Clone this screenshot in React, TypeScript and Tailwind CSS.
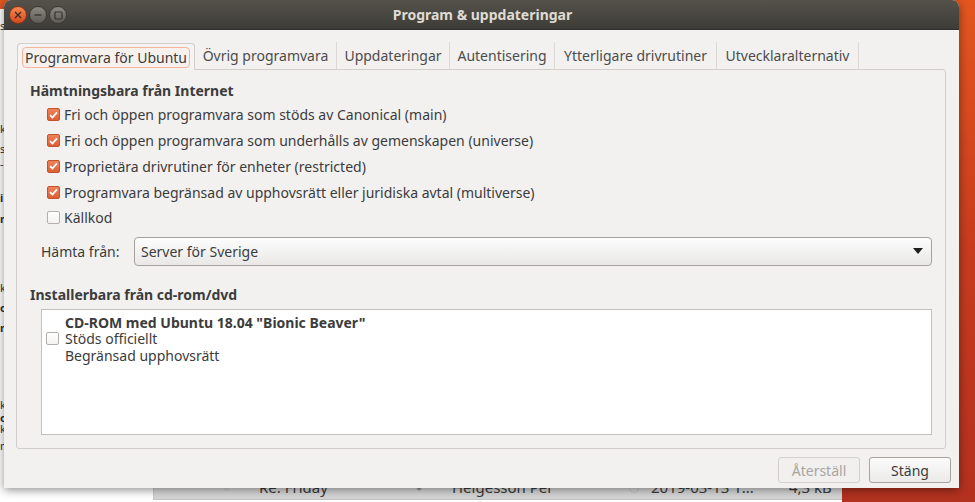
import React from "react";

const FONT = { fontFamily: '"Noto Sans", "Open Sans", sans-serif' };

function Check({ on }: { on: boolean }) {
  if (!on)
    return (
      <span className="inline-block w-[13px] h-[13px] shrink-0 rounded-[2px] border border-[#b3afab] bg-gradient-to-b from-white to-[#f4f3f2]" />
    );
  return (
    <span className="inline-flex items-center justify-center w-[13px] h-[13px] shrink-0 rounded-[2px] border border-[#c2532b] bg-gradient-to-b from-[#f0825a] to-[#de5f33]">
      <svg width="9" height="8" viewBox="0 0 9 8">
        <path d="M1 4.2 L3.4 6.5 L8 1.3" fill="none" stroke="#fff" strokeWidth="1.8" />
      </svg>
    </span>
  );
}

function Row({ on, label }: { on: boolean; label: string }) {
  return (
    <div className="flex items-center h-[25.75px] pl-[17px] gap-[4px]">
      <Check on={on} />
      <span>{label}</span>
    </div>
  );
}

const TABS: { label: string; w: string }[] = [
  { label: "Övrig programvara", w: "w-[142px]" },
  { label: "Uppdateringar", w: "w-[113px]" },
  { label: "Autentisering", w: "w-[105px]" },
  { label: "Ytterligare drivrutiner", w: "w-[162px]" },
  { label: "Utvecklaralternativ", w: "w-[142px]" },
];

// letters of the mail folder pane peeking out behind the dialog
const LEFT_GLYPHS: { t: string; mt: string; b?: boolean }[] = [
  { t: "s", mt: "mt-[12px]" },
  { t: "k", mt: "mt-[94px]" },
  { t: "s", mt: "mt-[11px]" },
  { t: "-", mt: "mt-[6px]" },
  { t: "i", mt: "mt-[25px]", b: true },
  { t: "n", mt: "mt-[12px]", b: true },
  { t: "k", mt: "mt-[60px]" },
  { t: "o", mt: "mt-[11px]", b: true },
  { t: "n", mt: "mt-[11px]", b: true },
  { t: "k", mt: "mt-[68px]" },
  { t: "o", mt: "mt-[4px]", b: true },
  { t: "k", mt: "mt-[2px]" },
  { t: "n", mt: "mt-[8px]" },
];

export default function App() {
  return (
    <div
      className="relative w-[975px] h-[502px] overflow-hidden bg-gradient-to-b from-[#e3561f] via-[#c63c1d] to-[#b3311f] text-[#3c3c3c]"
      style={FONT}
    >
      {/* background mail window */}
      <div className="absolute left-0 top-[9px] w-[842px] h-[493px] bg-white">
        <div className="flex flex-col text-[11px] text-[#333]">
          {LEFT_GLYPHS.map((g, i) => (
            <span key={i} className={`h-[9px] leading-[9px] ${g.mt} ${g.b ? "font-bold" : ""}`}>
              {g.t}
            </span>
          ))}
        </div>
        <div className="absolute left-[153px] top-[467px] w-[689px] h-[24px] border-l border-[#c9c9c9] border-b border-b-[#c4c4c4] bg-gradient-to-b from-[#e6e6e6] to-[#d4d4d4] flex items-center text-[15px] text-[#3a3a3a]">
          <span className="w-[68px]" />
          <span className="text-[10px] text-[#b5b5b5] w-[37px]">☆</span>
          <span className="w-[157px]">Re: Friday</span>
          <span className="text-[10px] text-[#999] w-[36px]">●</span>
          <span className="w-[177px]">Helgesson Per</span>
          <span className="w-[22px] h-[10px] inline-flex">
            <span className="w-[10px] h-[10px] rounded-full border border-[#c8c8c8]" />
          </span>
          <span className="w-[138px]">2019-03-13 1...</span>
          <span>4,3 kB</span>
        </div>
      </div>

      {/* dialog window */}
      <div className="absolute left-[4px] top-0 w-[955px] h-[488px] flex flex-col bg-[#f2f1f0] rounded-t-[7px] shadow-[0_2px_10px_rgba(0,0,0,0.45)] text-[14px]">
        <div className="relative h-[30px] shrink-0 rounded-t-[7px] bg-gradient-to-b from-[#55524b] to-[#3d3c37] flex items-center justify-center border-b border-[#2f2e2b]">
          <div className="absolute left-[5px] top-[6px] flex gap-[2px]">
            <span className="w-[18px] h-[18px] rounded-full border border-[#8a3314] bg-gradient-to-b from-[#f7884f] to-[#d24a1b] flex items-center justify-center">
              <svg width="8" height="8" viewBox="0 0 8 8">
                <path d="M1 1 L7 7 M7 1 L1 7" stroke="#3a2a22" strokeWidth="1.3" />
              </svg>
            </span>
            <span className="w-[18px] h-[18px] rounded-full border border-[#3a3935] bg-gradient-to-b from-[#8c8983] to-[#5e5b56] flex items-center justify-center">
              <svg width="8" height="8" viewBox="0 0 8 8">
                <path d="M0.5 4 L7.5 4" stroke="#34332f" strokeWidth="1.3" />
              </svg>
            </span>
            <span className="w-[18px] h-[18px] rounded-full border border-[#3a3935] bg-gradient-to-b from-[#8c8983] to-[#5e5b56] flex items-center justify-center">
              <svg width="9" height="9" viewBox="0 0 9 9">
                <rect x="1" y="1" width="7" height="7" rx="1" fill="none" stroke="#34332f" strokeWidth="1.2" />
              </svg>
            </span>
          </div>
          <span className="font-bold text-[14px] text-[#dfdbd2] ml-[2px]">Program &amp; uppdateringar</span>
        </div>

        <div className="flex-1 flex flex-col px-[12px] pt-[12px] pr-[13px]">
          {/* tabs */}
          <div className="flex items-end h-[27px] pl-[1px]">
            <div className="relative z-10 w-[178px] h-[27px] -mb-px flex items-center justify-center rounded-t-[4px] border border-b-0 border-[#d2cec9] bg-[#f5f4f3]">
              <span className="px-[2px] rounded-[4px] border border-[#f4b39a] bg-[#f7f1ee] leading-[19px] text-[#3c3c3c]">
                Programvara för Ubuntu
              </span>
            </div>
            {TABS.map((t) => (
              <div
                key={t.label}
                className={`${t.w} h-[27px] flex items-center justify-center border-r border-[#dcd8d4] text-[#4c4c4c]`}
              >
                {t.label}
              </div>
            ))}
          </div>

          {/* notebook frame */}
          <div className="h-[380px] border border-[#d2cec9] rounded-[3px] rounded-tl-none bg-[#f2f1f0] pl-[13px] pr-[13px] pt-[11px]">
            <div className="h-[21px] leading-[20px] font-bold">Hämtningsbara från Internet</div>
            <Row on label="Fri och öppen programvara som stöds av Canonical (main)" />
            <Row on label="Fri och öppen programvara som underhålls av gemenskapen (universe)" />
            <Row on label="Proprietära drivrutiner för enheter (restricted)" />
            <Row on label="Programvara begränsad av upphovsrätt eller juridiska avtal (multiverse)" />
            <Row on={false} label="Källkod" />

            <div className="flex items-center mt-[6px] pl-[11px]">
              <span className="w-[93px]">Hämta från:</span>
              <div className="flex-1 h-[29px] flex items-center justify-between pl-[6px] pr-[8px] rounded-[4px] border border-[#a5a19c] bg-gradient-to-b from-[#fdfdfd] to-[#e9e8e7]">
                <span>Server för Sverige</span>
                <svg width="10" height="6" viewBox="0 0 10 6">
                  <path d="M0 0 L10 0 L5 6 Z" fill="#1e1e1e" />
                </svg>
              </div>
            </div>

            <div className="mt-[19px] h-[20px] leading-[20px] font-bold">Installerbara från cd-rom/dvd</div>
            <div className="mt-[4px] ml-[11px] h-[126px] border border-[#c3bfbb] bg-white flex items-start pt-[5px] pl-[4px] leading-[16.5px]">
              <div className="self-stretch flex items-start pt-[17px]">
                <Check on={false} />
              </div>
              <div className="pl-[6px]">
                <div className="font-bold">CD-ROM med Ubuntu 18.04 "Bionic Beaver"</div>
                <div>Stöds officiellt</div>
                <div>Begränsad upphovsrätt</div>
              </div>
            </div>
          </div>

          {/* buttons */}
          <div className="flex justify-end gap-[9px] pt-[8px] -mr-[5px]">
            <button className="w-[82px] h-[26px] rounded-[3px] border border-[#d3cfcb] bg-[#f1f0ef] text-[#a8a5a1]">
              Återställ
            </button>
            <button className="w-[82px] h-[26px] rounded-[3px] border border-[#a8a39e] bg-gradient-to-b from-[#fbfbfb] to-[#ebeae9] text-[#3c3c3c]">
              Stäng
            </button>
          </div>
        </div>
      </div>
    </div>
  );
}
